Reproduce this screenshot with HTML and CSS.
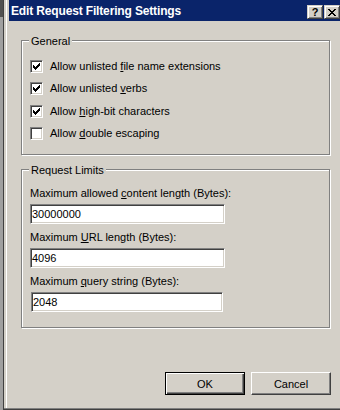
FILE: index.html
```html
<!DOCTYPE html>
<html lang="en">
<head>
  <meta charset="UTF-8">
  <meta name="viewport" content="width=device-width, initial-scale=1">
  <title>Edit Request Filtering Settings</title>
  <link rel="stylesheet" href="styles.css">
</head>
<body>

<div class="screen">
  <div class="behind"></div>

  <div class="dialog">
    <div class="titlebar">
      <span class="title">Edit Request Filtering Settings</span>
      <span class="cap-btn help">?</span>
      <span class="cap-btn close">
        <svg width="8" height="7" viewBox="0 0 8 7" shape-rendering="crispEdges">
          <rect x="0" y="0" width="2" height="1"/><rect x="6" y="0" width="2" height="1"/>
          <rect x="1" y="1" width="2" height="1"/><rect x="5" y="1" width="2" height="1"/>
          <rect x="2" y="2" width="4" height="1"/>
          <rect x="3" y="3" width="2" height="1"/>
          <rect x="2" y="4" width="4" height="1"/>
          <rect x="1" y="5" width="2" height="1"/><rect x="5" y="5" width="2" height="1"/>
          <rect x="0" y="6" width="2" height="1"/><rect x="6" y="6" width="2" height="1"/>
        </svg>
      </span>
    </div>

    <div class="content">
      <div class="group general">
        <div class="group-title">General</div>
        <div class="checks">
          <label class="check-row"><span class="check"><svg class="mark" width="7" height="7" viewBox="0 0 7 7" shape-rendering="crispEdges"><rect x="6" y="0" width="1" height="1"/><rect x="5" y="1" width="2" height="1"/><rect x="0" y="2" width="1" height="1"/><rect x="4" y="2" width="3" height="1"/><rect x="0" y="3" width="2" height="1"/><rect x="3" y="3" width="3" height="1"/><rect x="0" y="4" width="5" height="1"/><rect x="1" y="5" width="3" height="1"/><rect x="2" y="6" width="1" height="1"/></svg></span><span>Allow unlisted <u>f</u>ile name extensions</span></label>
          <label class="check-row"><span class="check"><svg class="mark" width="7" height="7" viewBox="0 0 7 7" shape-rendering="crispEdges"><rect x="6" y="0" width="1" height="1"/><rect x="5" y="1" width="2" height="1"/><rect x="0" y="2" width="1" height="1"/><rect x="4" y="2" width="3" height="1"/><rect x="0" y="3" width="2" height="1"/><rect x="3" y="3" width="3" height="1"/><rect x="0" y="4" width="5" height="1"/><rect x="1" y="5" width="3" height="1"/><rect x="2" y="6" width="1" height="1"/></svg></span><span>Allow unlisted <u>v</u>erbs</span></label>
          <label class="check-row"><span class="check"><svg class="mark" width="7" height="7" viewBox="0 0 7 7" shape-rendering="crispEdges"><rect x="6" y="0" width="1" height="1"/><rect x="5" y="1" width="2" height="1"/><rect x="0" y="2" width="1" height="1"/><rect x="4" y="2" width="3" height="1"/><rect x="0" y="3" width="2" height="1"/><rect x="3" y="3" width="3" height="1"/><rect x="0" y="4" width="5" height="1"/><rect x="1" y="5" width="3" height="1"/><rect x="2" y="6" width="1" height="1"/></svg></span><span>Allow <u>h</u>igh-bit characters</span></label>
          <label class="check-row"><span class="check"></span><span>Allow <u>d</u>ouble escaping</span></label>
        </div>
      </div>

      <div class="group limits">
        <div class="group-title">Request Limits</div>
        <div class="fields">
          <div class="field">
            <label for="maxContent">Maximum allowed <u>c</u>ontent length (Bytes):</label>
            <input class="text" id="maxContent" value="30000000">
          </div>
          <div class="field">
            <label for="maxUrl">Maximum <u>U</u>RL length (Bytes):</label>
            <input class="text" id="maxUrl" value="4096">
          </div>
          <div class="field">
            <label for="maxQuery">Maximum <u>q</u>uery string (Bytes):</label>
            <input class="text narrow" id="maxQuery" value="2048">
          </div>
        </div>
      </div>

      <div class="actions">
        <button class="btn default">OK</button>
        <button class="btn">Cancel</button>
      </div>
    </div>
  </div>
</div>

</body>
</html>
```

FILE: styles.css
```css
body {
  margin: 0;
  font-family: Tahoma, "Liberation Sans", Arial, sans-serif;
  font-size: 11px;
  color: #000;
  background-color: #D4D0C8;
}

.screen {
  display: flex;
  width: 340px;
  height: 410px;
  overflow: hidden;
}

.behind {
  width: 3px;
  border-right: 1px solid #404040;
  background: linear-gradient(#505050 0 17px, #a0a0a0 17px);
}

.dialog {
  flex: 1;
  display: flex;
  flex-direction: column;
  padding: 0 0 4px 5px;
  background-color: #D4D0C8;
  box-shadow: inset 0 -1px #404040, inset 0 -2px #808080, inset 2px 0 #D4D0C8, inset 3px 0 #fff;
}

/* title bar */
.titlebar {
  display: flex;
  height: 21px;
  padding-left: 2px;
  background-color: #0A246A;
  color: #fff;
}

.title {
  flex: 1;
  padding-top: 5px;
  font: bold 12px "Liberation Sans", Arial, sans-serif;
  line-height: 13px;
  letter-spacing: -0.15px;
  white-space: nowrap;
}

.cap-btn {
  display: flex;
  align-items: center;
  justify-content: center;
  width: 16px;
  height: 14px;
  margin-top: 5px;
  box-sizing: border-box;
  background-color: #D4D0C8;
  border: 1px solid;
  border-color: #D4D0C8 #404040 #404040 #D4D0C8;
  box-shadow: inset 1px 1px #fff, inset -1px -1px #808080;
  color: #000;
}

.cap-btn + .cap-btn {
  margin-left: 1px;
}

.help {
  font: bold 11px "Liberation Sans", Arial, sans-serif;
  line-height: 12px;
}

.close svg {
  fill: #000;
}

/* dialog body */
.content {
  flex: 1;
  padding: 19px 0 0 12px;
}

.group {
  width: 309px;
  box-sizing: border-box;
  padding-left: 8px;
  border: 1px solid #808080;
  box-shadow: inset 1px 1px #fff, 1px 1px #fff;
}

.general {
  height: 115px;
}

.limits {
  height: 159px;
  margin-top: 14px;
}

.group-title {
  width: fit-content;
  margin: -6px 0 0 -1px;
  padding: 0 2px;
  background-color: #D4D0C8;
  line-height: 13px;
}

.checks {
  display: flex;
  flex-direction: column;
  gap: 9.3px;
  margin-top: 12px;
}

.check-row {
  display: flex;
  align-items: center;
  gap: 7px;
  height: 13px;
  line-height: 13px;
  white-space: nowrap;
}

.check {
  display: flex;
  align-items: center;
  justify-content: center;
  flex: none;
  width: 13px;
  height: 13px;
  box-sizing: border-box;
  background-color: #fff;
  border: 1px solid;
  border-color: #808080 #fff #fff #808080;
  box-shadow: inset 1px 1px #404040, inset -1px -1px #D4D0C8;
}

.mark {
  fill: #000;
}

.fields {
  display: flex;
  flex-direction: column;
  gap: 7px;
  margin-top: 10px;
}

.field label {
  display: block;
  margin-bottom: 4px;
  line-height: 13px;
  white-space: nowrap;
}

.text {
  display: block;
  width: 195px;
  height: 20px;
  box-sizing: border-box;
  margin: 0;
  padding: 0 1px;
  font: inherit;
  line-height: 16px;
  color: #000;
  background-color: #fff;
  border: 1px solid;
  border-color: #808080 #fff #fff #808080;
  box-shadow: inset 1px 1px #404040, inset -1px -1px #D4D0C8;
  outline: none;
}

.text.narrow {
  width: 192px;
  margin-left: 1px;
}

/* buttons */
.actions {
  display: flex;
  justify-content: flex-end;
  gap: 6px;
  width: 310px;
  margin-top: 44px;
}

.btn {
  width: 80px;
  height: 23px;
  box-sizing: border-box;
  padding: 0;
  font: inherit;
  color: #000;
  background-color: #D4D0C8;
  border: 1px solid;
  border-color: #fff #404040 #404040 #fff;
  box-shadow: inset -1px -1px #808080;
}

.btn.default {
  border-color: #000;
  box-shadow: inset 1px 1px #fff, inset -1px -1px #404040, inset -2px -2px #808080;
}
```
